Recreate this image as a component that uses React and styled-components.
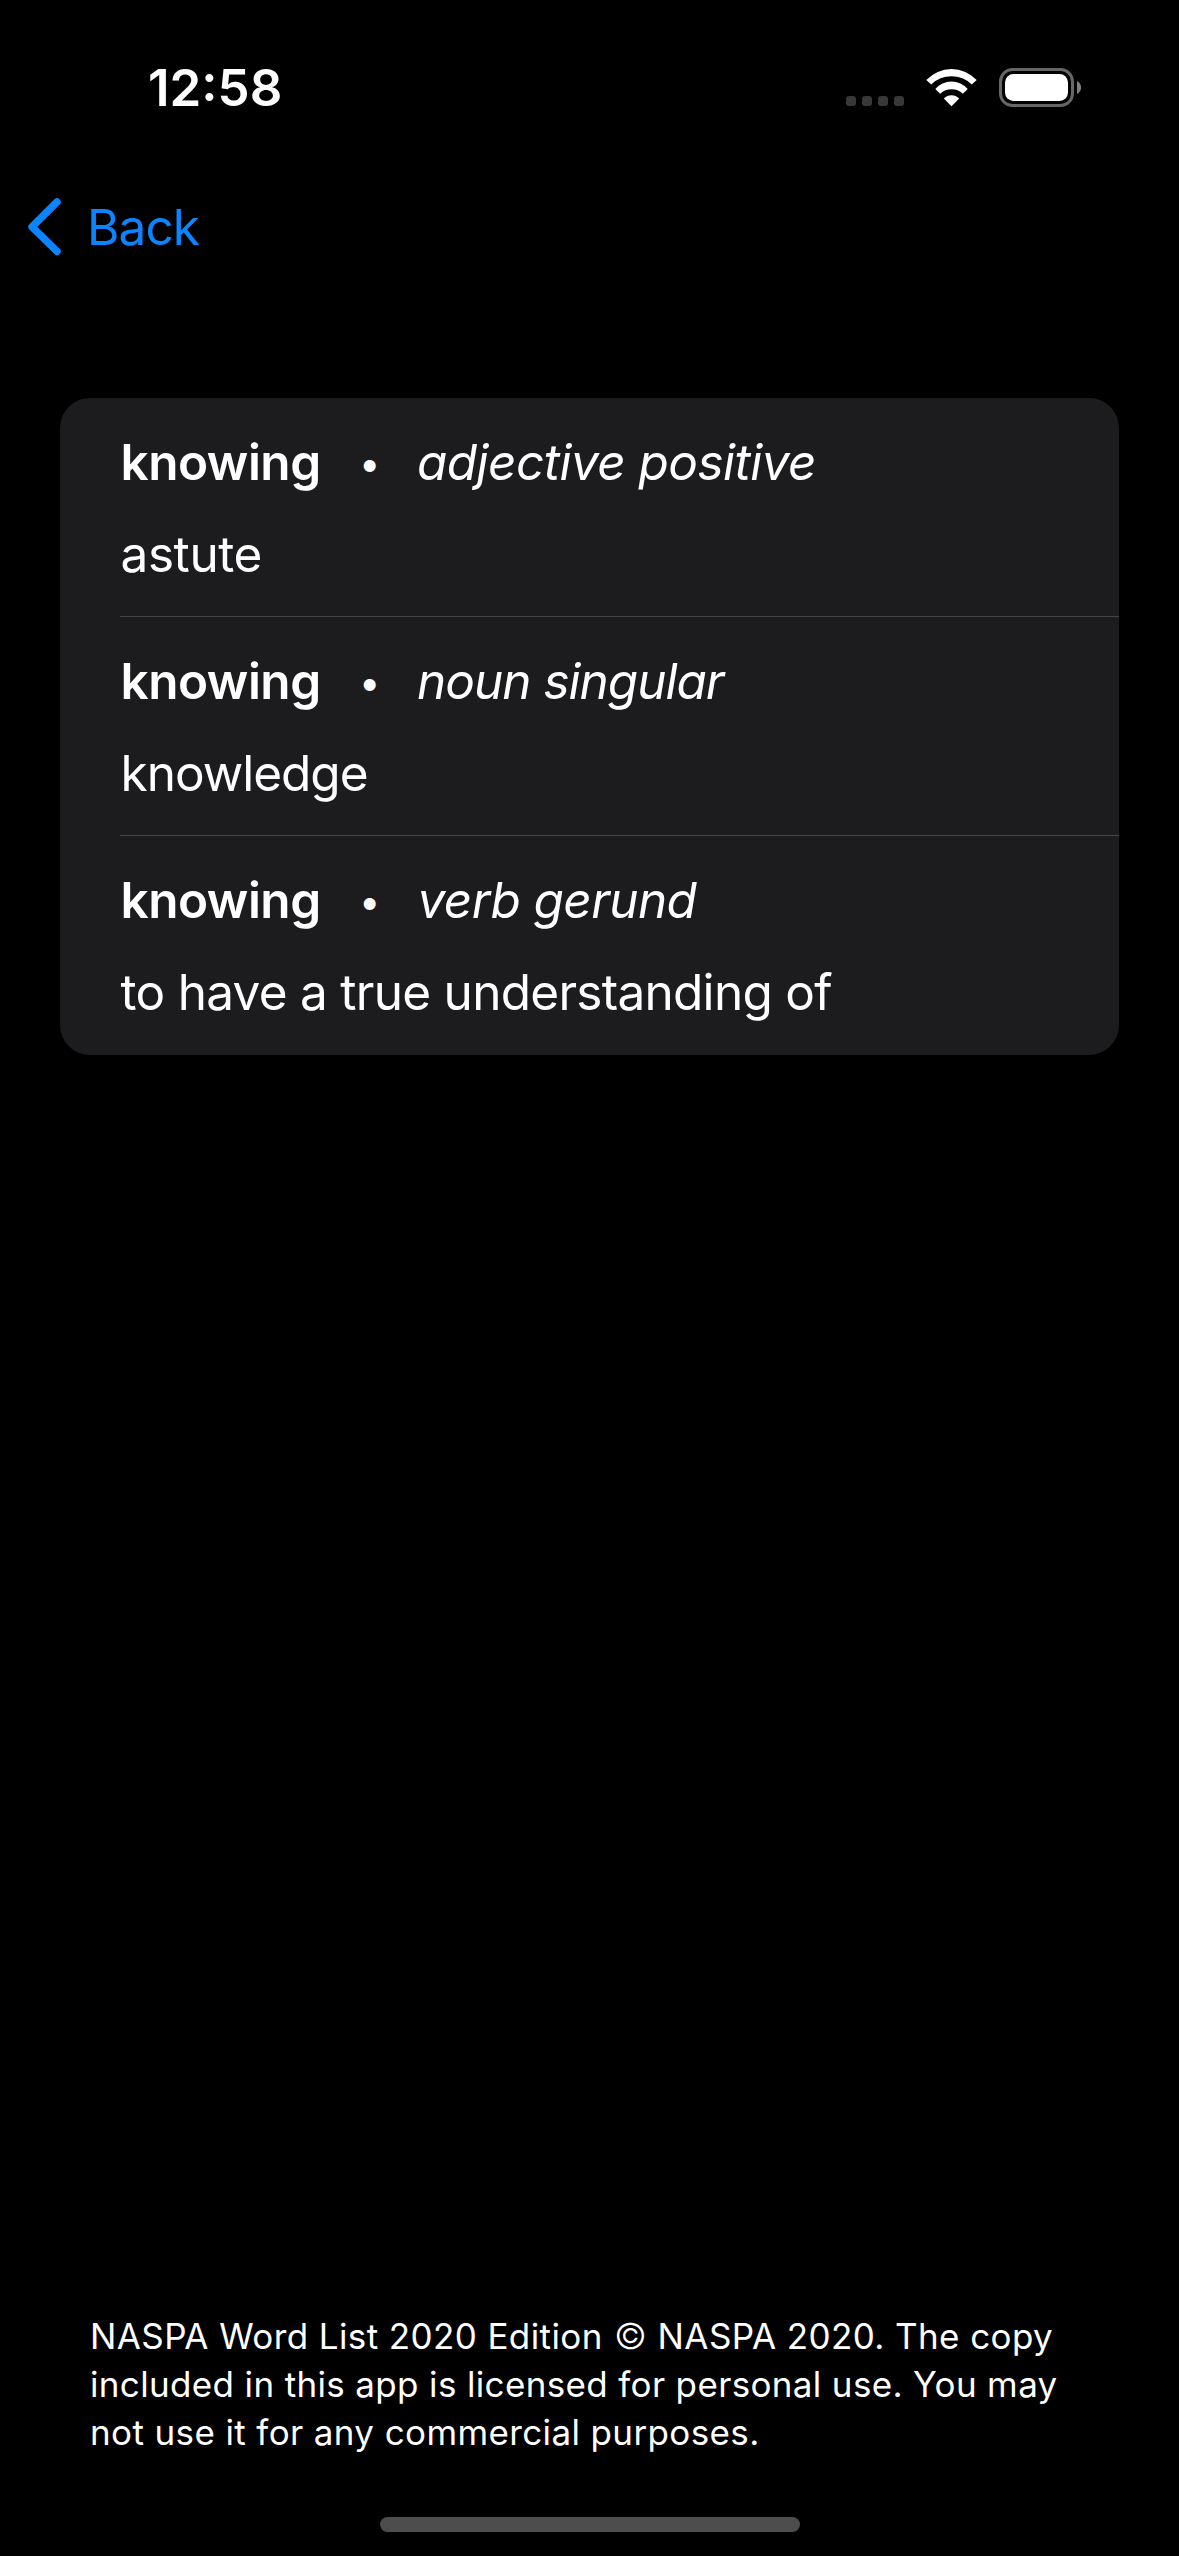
import React from "react";
import styled, { createGlobalStyle } from "styled-components";

const Global = createGlobalStyle`
  body { margin: 0; background: #000; }
  * { box-sizing: border-box; }
`;
const Screen = styled.main`
  width: 1179px; height: 2556px; background: #000; color: #fff;
  font-family: Inter, "Liberation Sans", sans-serif;
  display: flex; flex-direction: column;
`;
const StatusBar = styled.header`
  height: 177px; padding: 0 97px 0 148px;
  display: flex; justify-content: space-between;
`;
const Clock = styled.time`
  font-size: 51px; font-weight: 600; line-height: 60px; margin-top: 58px; white-space: nowrap;
`;
const StatusIcons = styled.svg`
  width: 240px; height: 60px; margin-top: 60px;
`;
const NavBar = styled.nav`
  height: 221px; padding: 20px 0 0 26px; display: flex; align-items: flex-start;
`;
const Back = styled.button`
  border: 0; background: none; padding: 0; color: #0a84ff; font: inherit; font-size: 49.5px; line-height: 60px;
  display: flex; align-items: center; gap: 25px; letter-spacing: -0.9px;
`;
const Card = styled.section`
  margin: 0 60px; background: #1c1c1e; border-radius: 30px; height: 657px;
  display: flex; flex-direction: column;
`;
const Entry = styled.article`
  height: 219px; padding-left: 60px;
`;
const EntryBody = styled.div`
  height: 219px; padding-top: 34px;
  border-bottom: ${p => (p.$last ? "none" : "1px solid #444447")};
`;
const Line = styled.div`
  display: flex; align-items: baseline; height: 60px; line-height: 60px; font-size: 49.5px;
  white-space: nowrap; margin-bottom: 32px;
`;
const Word = styled.strong`
  font-weight: 600; width: 237px; padding-left: 0.5px; letter-spacing: -0.5px;
`;
const Dot = styled.span`
  align-self: flex-start; width: 60px; margin-top: 1px; padding-left: 2px; font-size: 38px;
`;
const Kind = styled.em`
  padding-left: ${p => p.$indent}px;
  letter-spacing: ${p => p.$tracking}px;
`;
const Definition = styled.p`
  margin: 0; padding-left: 0.5px; font-size: 49.5px; line-height: 60px; white-space: nowrap;
  letter-spacing: ${p => p.$tracking}px;
`;
const Notice = styled.footer`
  margin: auto 0 0 90px; font-size: 35px; line-height: 48px; height: 221px; padding-top: 16px;
`;
const NoticeLine = styled.div`
  white-space: nowrap; letter-spacing: ${p => p.$tracking}px;
`;
const Copyright = styled.span`
  font-weight: 300; font-size: 36px; line-height: 1; margin-left: 1px;
`;
const HomeIndicator = styled.div`
  width: 420px; height: 15px; border-radius: 8px; background: #4d4d4d; margin: 0 auto 24px;
`;

const entries = [
  { kind: "adjective positive", kindTracking: -0.55, indent: 0, text: "astute", tracking: -0.4 },
  { kind: "noun singular", kindTracking: -1, indent: 0, text: "knowledge", tracking: -1 },
  { kind: "verb gerund", kindTracking: -0.6, indent: 0.5, text: "to have a true understanding of", tracking: -0.72 },
];

export default function App() {
  return (
    <Screen>
      <Global />
      <StatusBar>
        <Clock>12:58</Clock>
        <StatusIcons viewBox="842 60 240 60">
          <g fill="#383838">
            {[846, 862, 878, 894].map(x => (
              <rect key={x} x={x} y="96" width="10" height="10" rx="3" />
            ))}
          </g>
          <g fill="#fff">
            <path d="M926.3 80A34.4 34.4 0 0 1 976.7 80L971.8 84.6A28.7 28.7 0 0 0 931.2 84.6Z" />
            <path d="M935.3 89A21.4 21.4 0 0 1 967.7 89L962.8 93.8A16.5 16.5 0 0 0 940.2 93.8Z" />
            <path d="M943.8 98.5A10.5 10.5 0 0 1 959.2 98.5L951.5 106.3Z" />
            <rect x="1005" y="74" width="63" height="27" rx="8.5" />
          </g>
          <rect x="1000.5" y="69.5" width="72" height="36" rx="12" fill="none" stroke="#666" strokeWidth="3" />
          <path d="M1077 81C1082.4 83.4 1082.4 91.6 1077 94Z" fill="#808080" />
        </StatusIcons>
      </StatusBar>
      <NavBar>
        <Back>
          <svg width="36" height="60" viewBox="0 0 36 60">
            <path d="M31 5 6 29.8l25 24.6" fill="none" stroke="#0a84ff" strokeWidth="7.4" strokeLinecap="round" strokeLinejoin="round" />
          </svg>
          Back
        </Back>
      </NavBar>
      <Card>
        {entries.map((e, i) => (
          <Entry key={e.kind}>
            <EntryBody $last={i === entries.length - 1}>
              <Line>
                <Word>knowing</Word>
                <Dot>•</Dot>
                <Kind $indent={e.indent} $tracking={e.kindTracking}>{e.kind}</Kind>
              </Line>
              <Definition $tracking={e.tracking}>{e.text}</Definition>
            </EntryBody>
          </Entry>
        ))}
      </Card>
      <Notice>
        <NoticeLine $tracking={0.4}>NASPA Word List 2020 Edition <Copyright>©</Copyright> NASPA 2020. The copy</NoticeLine>
        <NoticeLine $tracking={0.35}>included in this app is licensed for personal use. You may</NoticeLine>
        <NoticeLine $tracking={0.38}>not use it for any commercial purposes.</NoticeLine>
      </Notice>
      <HomeIndicator />
    </Screen>
  );
}
